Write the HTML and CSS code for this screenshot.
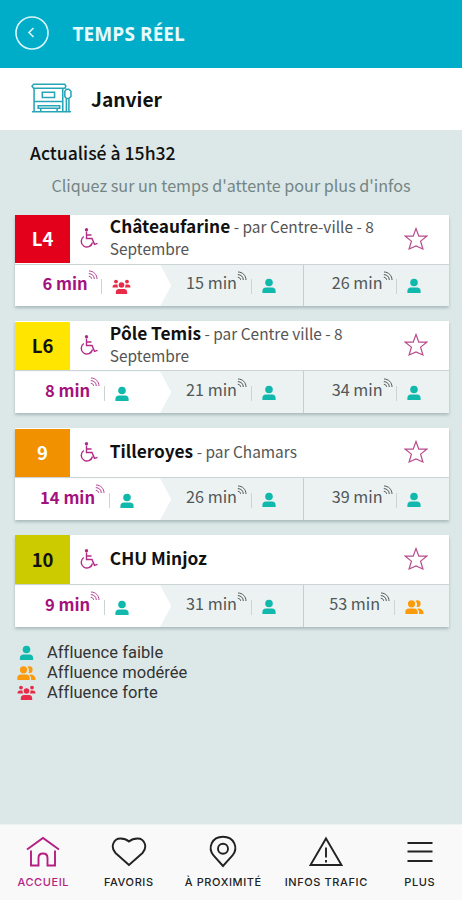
FILE: index.html
```html
<!DOCTYPE html>
<html lang="fr">
<head>
<meta charset="utf-8">
<title>Temps réel</title>
<link rel="stylesheet" href="styles.css">
</head>
<body>
<svg class="sprite" aria-hidden="true">
  <symbol id="wheelchair" viewBox="0 0 20 22"><circle cx="7.500" cy="2.700" r="1.700" fill="currentColor"/><path d="M7.500 4.500V11.500H13L15.500 17.300L18.500 16.400M7.800 8H12.500M4.800 9.500A5.700 5.700 0 1 0 13.500 15.500" fill="none" stroke="currentColor" stroke-width="1.400"/></symbol>
  <symbol id="star" viewBox="0 0 24 24"><path d="M12 1.500L14.800 9.200H22.800L16.600 14.100L18.900 22L12 18.900L5.100 22L7.400 14.100L1.200 9.200H9.200Z" fill="none" stroke="currentColor" stroke-width="1.200"/></symbol>
  <symbol id="live" viewBox="0 0 10 10"><path d="M1 1C5.500 1 9 4.500 9 9M.8 3.600C4 3.600 6.300 5.900 6.300 9M.8 6.300C2.500 6.400 3.500 7.400 3.600 8.800" fill="none" stroke="currentColor" stroke-width="1"/></symbol>
  <symbol id="low" viewBox="0 0 14 16"><circle cx="7" cy="4.500" r="3.800" fill="currentColor"/><path d="M.4 15V13.200Q.4 9.600 4 9.600H10Q13.600 9.600 13.600 13.200V15Z" fill="currentColor"/></symbol>
  <symbol id="medium" viewBox="0 0 19 16"><g fill="currentColor"><circle cx="6.500" cy="4.800" r="3.600"/><path d="M.3 15V13Q.3 9.400 4 9.400H9Q12.700 9.400 12.700 13V15ZM10.500 1.600Q15.600.4 15.600 4.700Q15.600 8.500 11.500 8Q13 5 10.500 1.600ZM12.300 9.500Q18.600 9 18.600 15H14.200Q14.300 11.500 12.300 9.500Z"/></g></symbol>
  <symbol id="high" viewBox="0 0 19 16"><g fill="currentColor"><circle cx="4" cy="2.600" r="1.900"/><circle cx="15" cy="2.600" r="1.900"/><circle cx="9.500" cy="6" r="2.800"/><path d="M.5 8.500Q.5 5.500 3 5.500H5.500Q5.300 7.500 6.300 8.500ZM18.500 8.500Q18.500 5.500 16 5.500H13.500Q13.700 7.500 12.700 8.500ZM3.800 15V13.500Q3.800 10 7 10H12Q15.200 10 15.200 13.500V15Z"/></g></symbol>
</svg>

<div class="app">
  <header class="topbar">
    <svg class="back" viewBox="0 0 34 34"><circle cx="17" cy="17" r="16"/><path d="M18.500 12L14 16.500L18.500 21"/></svg>
    <h1>TEMPS RÉEL</h1>
  </header>
  <div class="stop">
    <svg class="shelter" viewBox="0 0 40 30"><path d="M2.500 1H33L34 3L33 5H2.500L1 3ZM3 5V28M31 5V28M3 18H31M11 9H23V14H11ZM7 22H28V24.500H7ZM9.500 25V28M25.500 25V28M1 28H39M34.500 6H37L39 8V13L37 15H34.500L33 13V8ZM34.500 15V28M37 15V28"/></svg>
    <h2>Janvier</h2>
  </div>

  <main>
    <p class="updated">Actualisé à 15h32</p>
    <p class="hint">Cliquez sur un temps d'attente pour plus d'infos</p>

    <section class="lines">
      <article class="card">
        <div class="head"><b class="badge red">L4</b><svg class="wheel"><use href="#wheelchair"/></svg><p class="dest"><b>Châteaufarine</b> - par Centre-ville - 8<br>Septembre</p><svg class="fav"><use href="#star"/></svg></div>
        <div class="times">
          <div class="first"><span>6 min</span><svg class="live"><use href="#live"/></svg><i></i><svg class="crowd wide high"><use href="#high"/></svg></div>
          <div class="time"><span>15 min</span><svg class="live"><use href="#live"/></svg><i></i><svg class="crowd"><use href="#low"/></svg></div>
          <div class="time"><span>26 min</span><svg class="live"><use href="#live"/></svg><i></i><svg class="crowd"><use href="#low"/></svg></div>
        </div>
      </article>
      <article class="card">
        <div class="head"><b class="badge yellow">L6</b><svg class="wheel"><use href="#wheelchair"/></svg><p class="dest"><b>Pôle Temis</b> - par Centre ville - 8<br>Septembre</p><svg class="fav"><use href="#star"/></svg></div>
        <div class="times">
          <div class="first"><span>8 min</span><svg class="live"><use href="#live"/></svg><i></i><svg class="crowd"><use href="#low"/></svg></div>
          <div class="time"><span>21 min</span><svg class="live"><use href="#live"/></svg><i></i><svg class="crowd"><use href="#low"/></svg></div>
          <div class="time"><span>34 min</span><svg class="live"><use href="#live"/></svg><i></i><svg class="crowd"><use href="#low"/></svg></div>
        </div>
      </article>
      <article class="card">
        <div class="head"><b class="badge orange">9</b><svg class="wheel"><use href="#wheelchair"/></svg><p class="dest"><b>Tilleroyes</b> - par Chamars</p><svg class="fav"><use href="#star"/></svg></div>
        <div class="times">
          <div class="first"><span>14 min</span><svg class="live"><use href="#live"/></svg><i></i><svg class="crowd"><use href="#low"/></svg></div>
          <div class="time"><span>26 min</span><svg class="live"><use href="#live"/></svg><i></i><svg class="crowd"><use href="#low"/></svg></div>
          <div class="time"><span>39 min</span><svg class="live"><use href="#live"/></svg><i></i><svg class="crowd"><use href="#low"/></svg></div>
        </div>
      </article>
      <article class="card">
        <div class="head"><b class="badge olive">10</b><svg class="wheel"><use href="#wheelchair"/></svg><p class="dest"><b>CHU Minjoz</b></p><svg class="fav"><use href="#star"/></svg></div>
        <div class="times">
          <div class="first"><span>9 min</span><svg class="live"><use href="#live"/></svg><i></i><svg class="crowd"><use href="#low"/></svg></div>
          <div class="time"><span>31 min</span><svg class="live"><use href="#live"/></svg><i></i><svg class="crowd"><use href="#low"/></svg></div>
          <div class="time"><span>53 min</span><svg class="live"><use href="#live"/></svg><i></i><svg class="crowd wide medium"><use href="#medium"/></svg></div>
        </div>
      </article>
    </section>

    <ul class="legend">
      <li><svg class="crowd person"><use href="#low"/></svg><span>Affluence faible</span></li>
      <li><svg class="crowd medium"><use href="#medium"/></svg><span>Affluence modérée</span></li>
      <li><svg class="crowd high"><use href="#high"/></svg><span>Affluence forte</span></li>
    </ul>
  </main>

  <nav class="tabs">
    <a class="active"><svg viewBox="0 0 36 34"><path d="M2 14.500L18 3L34 14.500M6 15.500V30.500H13.500V23Q13.500 18.500 18 18.500Q22.500 18.500 22.500 23V30.500H30V15.500"/></svg><span>ACCUEIL</span></a>
    <a><svg viewBox="0 0 36 34"><path d="M18 30L4.500 18C-1 12 2.500 3.500 9.500 3.500Q14.500 3.500 18 6.500Q21.500 3.500 26.500 3.500C33.500 3.500 37 12 31.500 18Z"/></svg><span>FAVORIS</span></a>
    <a><svg viewBox="0 0 36 34"><path d="M18 31L8.500 20.500C2.500 13 6.500 1.700 18 1.700S33.500 13 27.500 20.500Z"/><circle cx="18" cy="13.700" r="5"/></svg><span>À PROXIMITÉ</span></a>
    <a><svg viewBox="0 0 36 34"><path d="M18 3.500L33.500 30H2.500ZM18 12.500V22.500M18 25V27.500"/></svg><span>INFOS TRAFIC</span></a>
    <a><svg viewBox="0 0 36 34"><path d="M5.500 8H30.500M5.500 16.500H30.500M5.500 26H30.500"/></svg><span>PLUS</span></a>
  </nav>
</div>
</body>
</html>
```
FILE: styles.css
```css
* { box-sizing: border-box; }
body { margin: 0; font-family: "Noto Sans CJK JP", "Noto Sans", sans-serif; color: #111; }
h1, h2, p, ul { margin: 0; padding: 0; }
svg { flex: none; display: block; }
.sprite { position: absolute; width: 0; height: 0; }
.app { width: 462px; height: 900px; display: flex; flex-direction: column; background: #dce8e8; }

.topbar { height: 67.500px; flex: none; background: #00adc8; display: flex; align-items: center; padding-left: 14.500px; }
.back { width: 34px; height: 34px; margin-top: -2.500px; fill: none; stroke: #d9f7fb; stroke-width: 1.600; }
.topbar h1 { margin-left: 24px; font: 700 19px/24px "Open Sans", sans-serif; letter-spacing: .1px; color: #e8fbfd; }
.stop { height: 62.500px; flex: none; background: #fff; display: flex; align-items: center; padding-left: 31px; }
.shelter { width: 41px; height: 31px; fill: none; stroke: #27a5b8; stroke-width: 1.500; }
.stop h2 { margin-left: 19px; font-size: 19.200px; line-height: 28px; font-weight: 700; }

main { flex: 1; }
.updated { margin: 10px 0 0 30px; font-size: 17.600px; line-height: 26px; font-weight: 500; }
.hint { margin-top: 7px; font-size: 16.150px; line-height: 24px; text-align: center; color: #748585; }

.lines { margin: 17.500px 13.500px 0 14.800px; display: flex; flex-direction: column; gap: 15.100px; }
.card { height: 91.800px; background: #fff; box-shadow: 0 2px 3px #a9b9ba; }
.head { height: 49px; display: flex; align-items: center; }
.badge { width: 55.500px; height: 48.500px; padding-bottom: 2px; display: flex; align-items: center; justify-content: center; font-size: 18.500px; color: #111; }
.red { background: #e2001a; color: #fff; }
.yellow { background: #ffe500; }
.orange { background: #f29100; color: #fff; }
.olive { background: #cbcb00; }
.wheel { width: 20px; height: 22px; margin-left: 9px; margin-top: -2px; color: #b32a87; }
.dest { flex: 1; margin: -4px 0 0 10.500px; font-size: 15.450px; line-height: 22px; color: #555; white-space: nowrap; }
.dest b { font-size: 17.300px; color: #111; }
.fav { width: 24px; height: 24px; margin: -1px 21px 0 0; color: #b74b8c; }

.times { height: 42.800px; display: flex; background: #ecf2f2; border-top: 1px solid #cbd5d5; }
.first, .time { display: flex; align-items: center; justify-content: center; }
.first { width: 156.500px; padding-right: 12.500px; background: #fff; clip-path: polygon(0 0, 92.800% 0, 100% 50%, 92.800% 100%, 0 100%); color: #a5117c; font-size: 16.600px; font-weight: 700; }
.time { width: 132px; padding-right: 13px; color: #505858; font-size: 16.200px; }
.time:last-child { flex: 1; padding-right: 0; border-left: 1px solid #c5cdcd; }
.time span, .first span { line-height: 24px; margin-top: -6px; white-space: nowrap; }
.first span { margin-top: -4px; }
.live { width: 10px; height: 10px; margin-top: -18px; }
.first .live { margin-top: -21px; opacity: .8; }
.times i { width: 1px; height: 15px; margin: 3px 10px 0 3.500px; background: #ccd4d4; }
.crowd { width: 14px; height: 16px; margin-top: 1px; color: #10b9ac; }
.first .crowd { margin-top: 3px; }
.crowd.wide { width: 19px; }
.crowd.medium { color: #fb9b0c; }
.crowd.high { color: #e72b48; }

.legend { list-style: none; margin: 16px 0 0 17px; font: 16.500px/20px Roboto, sans-serif; letter-spacing: .05px; color: #333; }
.legend li { height: 20px; display: flex; align-items: center; }
.legend .crowd { width: 19px; margin-top: 0; }
.legend span { margin-left: 11px; }

.tabs { height: 76px; flex: none; background: #f9f9f9; border-top: 1px solid #edf2f2; display: grid; grid-template-columns: 86px 85px 104px 102px 85px; color: #222; }
.tabs a { display: flex; flex-direction: column; align-items: center; padding-top: 9.500px; }
.tabs svg { width: 36px; height: 34px; fill: none; stroke: currentColor; stroke-width: 1.900; }
.tabs span { margin-top: 5px; font: 500 11px/16px Inter, sans-serif; letter-spacing: .6px; margin-right: -.6px; white-space: nowrap; }
.tabs .active { color: #b41f83; }
```
